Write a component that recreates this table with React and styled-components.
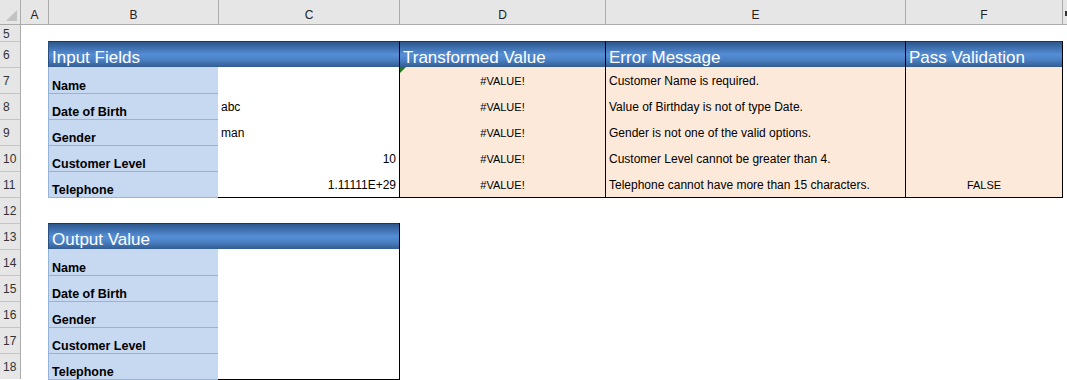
import React from 'react';
import styled, { createGlobalStyle, css } from 'styled-components';

const GlobalStyle = createGlobalStyle`
  html, body {
    margin: 0;
    padding: 0;
    background: #ffffff;
  }
  body {
    font-family: "Liberation Sans", Arial, sans-serif;
    color: #000;
  }
`;

// column tracks: row header, A, B, C, D, E, F, G (cut off)
const Sheet = styled.div`
  display: grid;
  grid-template-columns: 21px 27px 170px 181px 206px 300px 157px 1fr;
  grid-template-rows: 25px 16px repeat(13, 26px);
  width: 1067px;
  height: 380px;
  overflow: hidden;
  position: relative;
`;

const Corner = styled.div`
  grid-column: 1;
  grid-row: 1;
  background: #e6e6e6;
  border-right: 1px solid #ababab;
  border-bottom: 1px solid #ababab;
  box-sizing: border-box;
  display: flex;
  align-items: flex-end;
  justify-content: flex-end;
  padding: 0 3px 3px 0;
`;

const ColHead = styled.div`
  grid-column: ${p => p.$col};
  grid-row: 1;
  background: #e6e6e6;
  border-bottom: 1px solid #ababab;
  ${p => p.$sep && css`border-left: 1px solid #ababab;`}
  box-sizing: border-box;
  display: flex;
  align-items: center;
  justify-content: ${p => (p.$cut ? 'flex-start' : 'center')};
  padding-top: 5px;
  font-size: 12px;
  color: #222;
`;

const CutMark = styled.span`
  display: block;
  width: 2px;
  height: 5px;
  margin: 0 0 2px 2px;
  background: #333;
`;

const RowHead = styled.div`
  grid-column: 1;
  grid-row: ${p => p.$row};
  background: #e6e6e6;
  border-right: 1px solid #ababab;
  ${p => p.$sep && css`border-top: 1px solid #c4c4c4;`}
  box-sizing: border-box;
  display: flex;
  align-items: center;
  padding: 1px 0 0 3px;
  font-size: 12px;
  color: #333;
`;

const Band = styled.div`
  grid-column: ${p => p.$col} / span ${p => p.$span || 1};
  grid-row: ${p => p.$row};
  background: linear-gradient(180deg, #2d578b 0%, #4275b6 28%, #558ed5 50%, #4a80c4 72%, #335c91 100%);
  border-top: 1px solid #1c375c;
  ${p => p.$divider ? css`border-left: 1px solid #000;` : css`border-left: 1px solid #2a4f80;`}
  ${p => p.$edge && css`box-shadow: 1px 0 0 #000;`}
  box-sizing: border-box;
  display: flex;
  align-items: flex-end;
  padding: 0 0 1px 3px;
  color: #ffffff;
  font-size: 17px;
  line-height: 1;
  white-space: nowrap;
`;

const Label = styled.div`
  grid-column: 3;
  grid-row: ${p => p.$row};
  background: #c6d9f1;
  border-left: 1px solid #95b3d7;
  ${p => !p.$first && css`border-top: 1px solid #95b3d7;`}
  ${p => p.$last && css`box-shadow: 0 1px 0 #95b3d7;`}
  box-sizing: border-box;
  display: flex;
  align-items: flex-end;
  padding: 0 0 1px 3px;
  font-size: 12.5px;
  font-weight: bold;
  line-height: 1;
  white-space: nowrap;
`;

const edgeShadow = p => {
  const s = [];
  if (p.$edge) s.push('1px 0 0 #000');
  if (p.$bottom) s.push('0 1px 0 #000');
  if (p.$edge && p.$bottom) s.push('1px 1px 0 #000');
  return s.length ? `box-shadow: ${s.join(', ')};` : '';
};

const Value = styled.div`
  grid-column: ${p => p.$col};
  grid-row: ${p => p.$row};
  position: relative;
  background: ${p => (p.$tint ? '#fde9d9' : '#ffffff')};
  ${p => p.$divider && css`border-left: 1px solid #000;`}
  ${edgeShadow}
  box-sizing: border-box;
  display: flex;
  align-items: center;
  justify-content: ${p => p.$align === 'right' ? 'flex-end' : p.$align === 'center' ? 'center' : 'flex-start'};
  padding: 2px 3px 0 3px;
  font-size: ${p => (p.$caps ? '11px' : '12px')};
  white-space: nowrap;
`;

const ErrorFlag = styled.span`
  position: absolute;
  top: 0;
  left: 0;
  width: 0;
  height: 0;
  border-top: 6px solid #1e7b1e;
  border-right: 6px solid transparent;
`;

const columns = ['A', 'B', 'C', 'D', 'E', 'F'];

const inputRows = [
  { label: 'Name', raw: '', rawAlign: 'left', message: 'Customer Name is required.', pass: '' },
  { label: 'Date of Birth', raw: 'abc', rawAlign: 'left', message: 'Value of Birthday is not of type Date.', pass: '' },
  { label: 'Gender', raw: 'man', rawAlign: 'left', message: 'Gender is not one of the valid options.', pass: '' },
  { label: 'Customer Level', raw: '10', rawAlign: 'right', message: 'Customer Level cannot be greater than 4.', pass: '' },
  { label: 'Telephone', raw: '1.11111E+29', rawAlign: 'right', message: 'Telephone cannot have more than 15 characters.', pass: 'FALSE' },
];

const outputLabels = ['Name', 'Date of Birth', 'Gender', 'Customer Level', 'Telephone'];

// grid row index = sheet row - 3 (row 5 sits on grid line 2)
const g = r => r - 3;

const App = () => {
  return (
    <>
      <GlobalStyle />
      <Sheet>
        <Corner>
          <svg width="11" height="11" viewBox="0 0 11 11">
            <polygon points="11,0 11,11 0,11" fill="#c2c2c2" />
          </svg>
        </Corner>
        {columns.map((c, i) => (
          <ColHead key={c} $col={i + 2} $sep={i > 0}>{c}</ColHead>
        ))}
        <ColHead $col={8} $sep $cut><CutMark /></ColHead>

        {Array.from({ length: 14 }, (_, i) => i + 5).map(r => (
          <RowHead key={r} $row={g(r)} $sep={r > 5}>{r}</RowHead>
        ))}

        {/* input block */}
        <Band $col={3} $span={2} $row={g(6)}>Input Fields</Band>
        <Band $col={5} $row={g(6)} $divider>Transformed Value</Band>
        <Band $col={6} $row={g(6)} $divider>Error Message</Band>
        <Band $col={7} $row={g(6)} $divider $edge>Pass Validation</Band>

        {inputRows.map((row, i) => {
          const r = g(7 + i);
          const last = i === inputRows.length - 1;
          return (
            <React.Fragment key={row.label}>
              <Label $row={r} $first={i === 0} $last={last}>{row.label}</Label>
              <Value $col={4} $row={r} $align={row.rawAlign} $bottom={last}>{row.raw}</Value>
              <Value $col={5} $row={r} $tint $divider $align="center" $caps $bottom={last}>
                {i === 0 && <ErrorFlag />}
                #VALUE!
              </Value>
              <Value $col={6} $row={r} $tint $divider $bottom={last}>{row.message}</Value>
              <Value $col={7} $row={r} $tint $divider $edge $align="center" $caps $bottom={last}>{row.pass}</Value>
            </React.Fragment>
          );
        })}

        {/* output block */}
        <Band $col={3} $span={2} $row={g(13)} $edge>Output Value</Band>
        {outputLabels.map((label, i) => {
          const r = g(14 + i);
          const last = i === outputLabels.length - 1;
          return (
            <React.Fragment key={label}>
              <Label $row={r} $first={i === 0} $last={last}>{label}</Label>
              <Value $col={4} $row={r} $edge $bottom={last} />
            </React.Fragment>
          );
        })}
      </Sheet>
    </>
  );
};

export default App;
